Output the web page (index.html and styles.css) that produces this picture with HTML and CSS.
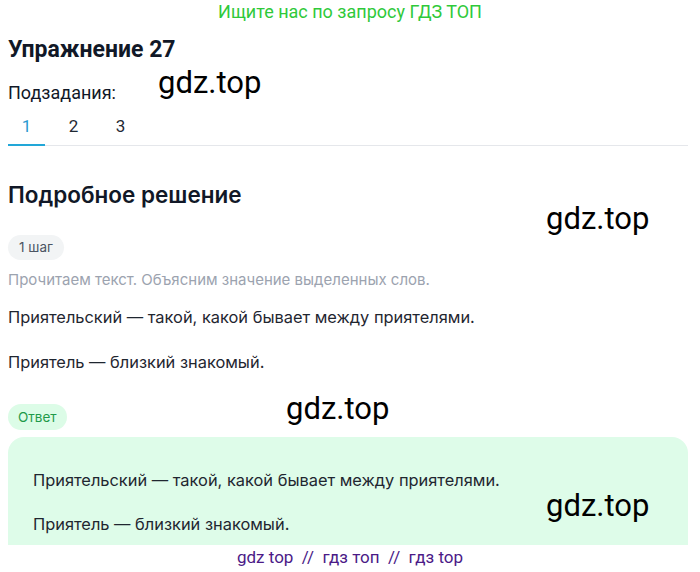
FILE: index.html
```html
<!DOCTYPE html>
<html lang="ru">
<head>
    <meta charset="UTF-8">
    <title>Упражнение 27</title>
    <link rel="stylesheet" href="styles.css">
</head>
<body>
    <div class="promo">Ищите нас по запросу ГДЗ ТОП</div>

    <div class="page">
        <h1 class="title">Упражнение 27</h1>

        <div class="subtasks">
            <p class="subtasks-label">Подзадания:</p>
            <div class="tabs">
                <span class="tab active">1</span>
                <span class="tab">2</span>
                <span class="tab">3</span>
            </div>
        </div>

        <h2 class="section-title">Подробное решение</h2>

        <span class="badge badge-step">1 шаг</span>
        <p class="hint">Прочитаем текст. Объясним значение выделенных слов.</p>
        <p class="text">Приятельский — такой, какой бывает между приятелями.</p>
        <p class="text">Приятель — близкий знакомый.</p>

        <span class="badge badge-answer">Ответ</span>
        <div class="answer">
            <p class="text">Приятельский — такой, какой бывает между приятелями.</p>
            <p class="text">Приятель — близкий знакомый.</p>
        </div>
    </div>

    <div class="footer">gdz top &nbsp;//&nbsp; гдз топ &nbsp;//&nbsp; гдз top</div>

    <div class="wm wm1">gdz.top</div>
    <div class="wm wm2">gdz.top</div>
    <div class="wm wm3">gdz.top</div>
    <div class="wm wm4">gdz.top</div>
</body>
</html>
```

FILE: styles.css
```css
body { margin: 0; font-family: Inter, "Noto Sans", sans-serif; color: #1f2933; background: #fff; position: relative; height: 572px; overflow: hidden; }
p { margin: 0; }

.promo { font-family: Roboto, sans-serif; font-size: 18px; color: #2fc93a; text-align: center; line-height: 24px; height: 24px; }

.page { padding: 0 12px 0 8px; height: 521px; overflow: hidden; }
.title { font-family: Roboto, sans-serif; font-size: 23px; font-weight: 700; color: #111827; margin: 11px 0 0; line-height: 30px; }

.subtasks { margin-top: 18px; }
.subtasks-label { font-family: Roboto, sans-serif; font-size: 18px; line-height: 20px; color: #111827; }
.tabs { display: flex; gap: 10px; margin-top: 13px; border-bottom: 1px solid #e5e7eb; }
.tab { font-family: Roboto, sans-serif; font-size: 17px; width: 37px; text-align: center; line-height: 20px; padding-bottom: 8px; color: #1f2933; border-bottom: 2px solid transparent; margin-bottom: -1px; }
.tab.active { color: #2b9ad0; border-bottom-color: #22a7d8; }

.section-title { font-size: 22.5px; font-weight: 600; color: #111827; margin: 34px 0 0; line-height: 30px; }

.badge { display: block; width: fit-content; font-size: 13.5px; line-height: 25px; padding: 0 11px; border-radius: 13px; }
.badge-step { background: #f2f4f5; color: #4b5563; margin-top: 25px; }
.badge-answer { background: #dcfce7; color: #1f9a4a; margin-top: 31px; line-height: 26px; padding: 0 10px; }

.hint { font-size: 15px; color: #9ca3af; margin-top: 10px; line-height: 20px; }
.text { font-size: 16.4px; line-height: 22px; margin-top: 23px; color: #1f2630; }
.hint + .text { margin-top: 16px; }

.answer { background: #defce9; border-radius: 16px 16px 0 0; margin-top: 7px; padding: 32px 25px 40px; }
.answer .text:first-child { margin-top: 0; }
.answer .text { margin-top: 22px; }

.footer { font-family: Roboto, sans-serif; font-size: 17px; color: #4b1a87; text-align: center; line-height: 24px; }

.wm { position: absolute; font-family: Roboto, sans-serif; font-size: 31px; color: #000; line-height: 34px; }
.wm1 { left: 158px; top: 66px; }
.wm2 { left: 546px; top: 202px; }
.wm3 { left: 286px; top: 392px; }
.wm4 { left: 546px; top: 489px; }
```
